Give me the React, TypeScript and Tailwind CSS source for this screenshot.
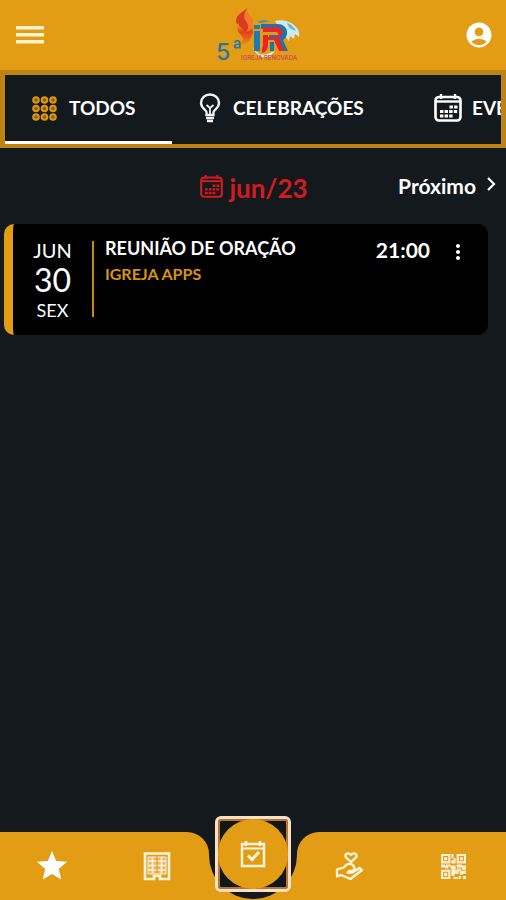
import type { ReactNode } from 'react';
import { MdAccountCircle, MdMoreVert, MdStar } from 'react-icons/md';

function MenuIcon() {
  return (
    <svg viewBox="0 0 28 18" className="h-[18px] w-7" fill="#fff3d2" aria-hidden="true">
      <rect width="28" height="3.5" />
      <rect y="7" width="28" height="3.5" />
      <rect y="14" width="28" height="3.5" />
    </svg>
  );
}

function Logo() {
  return (
    <svg viewBox="0 0 90 60" className="ml-2 h-[60px] w-[90px]" role="img" aria-label="5ª IR">
      <defs>
        <linearGradient id="flame" x1="0" y1="0" x2="0" y2="1">
          <stop offset="0" stopColor="#f4a52a" />
          <stop offset="0.4" stopColor="#e2401c" />
          <stop offset="1" stopColor="#f58a26" />
        </linearGradient>
      </defs>
      <path d="M34 3c-4 4-11 7-11 13 0 4 6 6 9 12 3-4 8-6 8-11 0-5-8-7-6-14z" fill="#d93a20" />
      <path d="M34 3c-3 6-4 9-1 13 2 3 3 6 1 10 4-3 7-5 6-10-1-4-7-7-6-13z" fill="#f27a2a" />
      <path d="M25 18c-2 6 0 9 3 12 3 4 3 7-3 11 9-1 14-7 15-14 0-3 0-5 1-8-2 4-5 7-9 8-3-2-6-5-7-9z" fill="url(#flame)" />
      <path d="M44 17c5-2 8-2 13-1l-9 2z" fill="#3a93b8" />
      <path d="M62 16c7-2 16 0 21 6 3 3 4 6 3 10l-4-3-1 5-4-3-1 5c-4-4-5-9-10-13z" fill="#cfe9ef" />
      <path d="M74 18c4 1 7 4 9 8l-5-2c-2-1-3-3-4-6z" fill="#6cb8d0" />
      <path d="M40 42c2 5 8 9 14 7l8-3-6 6c-7 2-14-2-16-10z" fill="#d3edf2" />
      {/* i */}
      <path d="M41 26h6v20h-6zM41 20h6v4h-6z" fill="#1c7bb0" />
      {/* R, blue outline over red body */}
      <path d="M48 19h17c10 0 12 12 5 16l5 11h-6l-6-11h-7v-5h9c4 0 4-6 0-6H48z" fill="#1a76aa" />
      <path d="M50 22h14c6 0 8 8 2 11l5 13h-5l-5-11h-6v-3h8c3 0 3-5 0-5H50z" fill="#e5252f" />
      <path d="M50 30h5v9c0 5-2 8-6 9v-5c1-1 1-2 1-4z" fill="#e5252f" />
      <path d="M57 37h4v9h-4z" fill="#1a76aa" />
      <text x="3" y="55" fontFamily="Inter, sans-serif" fontSize="23" fontWeight="500" fill="#2679a3">5</text>
      <text x="19" y="51" fontFamily="Inter, sans-serif" fontSize="22" fontWeight="500" fill="#2679a3">ª</text>
      <text x="28" y="55" fontFamily="Inter, sans-serif" fontSize="6" fontWeight="600" fill="#cf4f51">IGREJA RENOVADA</text>
    </svg>
  );
}

function DotsIcon() {
  return (
    <svg viewBox="0 0 25 25" className="size-[25px] shrink-0" aria-hidden="true">
      {[4, 12.5, 21].map((y) =>
        [4, 12.5, 21].map((x) => (
          <circle key={`${x}-${y}`} cx={x} cy={y} r="2.8" fill="#8a6010" stroke="#dc9514" strokeWidth="2" />
        )),
      )}
    </svg>
  );
}

function BulbIcon() {
  return (
    <svg viewBox="0 0 22 30" className="h-[30px] w-[22px] shrink-0" fill="none" stroke="#f2f2f2" strokeWidth="2.4" aria-hidden="true">
      <path d="M7.500 22v-3c0-2-5.500-4-5.500-9a9 8.500 0 0 1 18 0c0 5-5.500 7-5.500 9v3z" />
      <path d="M11 21v-6M7.500 12l3.500 3 3.500-3" strokeWidth="1.8" />
      <path d="M7 25h8M8 28h6" />
    </svg>
  );
}

function CalendarIcon({ className }: { className: string }) {
  return (
    <svg viewBox="0 0 28 28" className={className} fill="none" stroke="currentColor" aria-hidden="true">
      <rect x="1.5" y="3" width="25" height="23.5" rx="3.5" strokeWidth="2.6" />
      <path d="M2 7.500h24" strokeWidth="2.4" />
      <path d="M7 0v5M21 0v5" strokeWidth="2.4" />
      <path d="M15.500 13h8M6 17.500h18M6 22h13" strokeWidth="3" strokeDasharray="3.4 1.2" />
    </svg>
  );
}

function BuildingIcon() {
  return (
    <svg viewBox="0 0 28 30" className="h-[30px] w-7" fill="none" stroke="#fff3da" aria-hidden="true">
      <path d="M2 2.500h24v25.500h-9v-3h-6v3H2z" strokeWidth="2.6" />
      <path d="M5 6h18v17H5z" fill="#eab669" strokeWidth="1" />
      <path d="M9.500 6v17M18.500 6v17M5 10h18M5 14.500h18M5 19h18" strokeWidth="1.6" />
      <path d="M14 5v17" stroke="#e29d14" strokeWidth="1.2" />
    </svg>
  );
}

function EventCheckIcon() {
  return (
    <svg viewBox="0 0 26 28" className="h-7 w-[26px]" fill="none" stroke="#fff6e2" aria-hidden="true">
      <path d="M2 4h22v22H2z" strokeWidth="2.4" />
      <path d="M2 8.500h22" strokeWidth="2" />
      <path d="M6 1v5M20 1v5" strokeWidth="2.6" />
      <path d="M8 15.500l4 4 7-7.500" strokeWidth="3" />
    </svg>
  );
}

function DonateIcon() {
  return (
    <svg viewBox="0 0 28 28" className="size-7" fill="none" stroke="#fff6e2" strokeWidth="2.3" strokeLinejoin="round" aria-hidden="true">
      <path d="M16 10l-5-4.500c-2-3 2-6 5-2.500 3-3.500 7-.5 5 2.500z" />
      <path d="M9 15.500c3-5 8-4.500 10-1 1.500 3-1 5-3.500 4.500M9 15.500l-7 2v7l4-1.500 9.500 4 11.500-9-2.500-2-7 4.500h-5l3.500-2.500" />
    </svg>
  );
}

function QrIcon() {
  return (
    <svg viewBox="0 0 24 24" className="size-[25px]" fill="#fff0dc" aria-hidden="true">
      <path fillRule="evenodd" d="M0 0h9v9H0zM2 2v5h5V2zM15 0h9v9h-9zm2 2v5h5V2zM0 15h9v9H0zm2 2v5h5v-5z" />
      <path d="M3 3h3v3H3zM18 3h3v3h-3zM3 18h3v3H3zM10 0h2v4h-2zM12 4h2v5h-4V6h2zM0 10h4v3H0zM5 10h4v2H7v2H4v-2zM9 11h5v3H9zM10 13h4v3h3v3h-4v2h-3zM15 10h5v3h-5zM20 11h4v4h-4v-2h-1zM15 14h4v2h-4zM18 16h6v3h-3v1h-3zM12 22h4v2h-4zM17 21h2v3h-2zM21 21h3v3h-3z" />
    </svg>
  );
}

function Tab({ icon, label, active, className }: { icon: ReactNode; label: string; active?: boolean; className: string }) {
  return (
    <button
      role="tab"
      aria-selected={!!active}
      className={`flex h-[69px] shrink-0 items-center border-b-3 pl-[27px] text-[19px] font-bold ${
        active ? 'border-white' : 'border-transparent'
      } ${className}`}
    >
      {icon}
      <span>{label}</span>
    </button>
  );
}

function NavButton({ label, children }: { label: string; children: ReactNode }) {
  return (
    <button aria-label={label} className="flex flex-1 items-center justify-center">
      {children}
    </button>
  );
}

export default function App() {
  return (
    <div className="flex min-h-screen flex-col bg-[#14191d] font-['Lato','Liberation_Sans',sans-serif] text-white">
      <header className="flex h-[70px] items-center justify-between bg-[#e29d14] pr-3 pl-4">
        <button aria-label="Menu">
          <MenuIcon />
        </button>
        <Logo />
        <button aria-label="Conta">
          <MdAccountCircle className="size-[30px]" />
        </button>
      </header>

      <div className="border-5 border-b-4 border-[#bd8414] bg-[#14191d]">
        <div role="tablist" className="flex overflow-hidden">
          <Tab active label="TODOS" icon={<DotsIcon />} className="w-[167px] gap-3" />
          <Tab label="CELEBRAÇÕES" icon={<BulbIcon />} className="w-[235px] gap-3" />
          <Tab label="EVENTOS" icon={<CalendarIcon className="size-7 shrink-0" />} className="w-[180px] gap-2.5" />
        </div>
      </div>

      <main className="flex-1">
        <div className="grid h-[76px] grid-cols-[1fr_auto_1fr] items-center pr-2.5 pl-3">
          <h1 className="col-start-2 flex items-center gap-1.5 pt-1 text-[26px] font-bold text-[#d41a1d]">
            <CalendarIcon className="mb-1 size-[23px]" />
            jun/23
          </h1>
          <button className="flex items-center gap-2.5 justify-self-end text-[21px] font-bold">
            Próximo
            <svg viewBox="0 0 10 16" className="mb-1 h-4 w-2.5" fill="none" stroke="white" strokeWidth="2.2" aria-hidden="true">
              <path d="M2 2l6 6-6 6" />
            </svg>
          </button>
        </div>

        <article className="mr-[18px] ml-1 flex h-[111px] rounded-[10px] border-l-9 border-[#e29d14] bg-black">
          <div className="flex w-[79px] flex-col items-center pt-3">
            <span className="text-xl leading-7">JUN</span>
            <span className="text-[32px] leading-8">30</span>
            <span className="text-lg leading-7">SEX</span>
          </div>
          <div className="mt-[17px] h-[76px] w-0.5 bg-[#c98a14]" />
          <div className="flex-1 pt-3 pl-[11px]">
            <h2 className="text-lg leading-6 font-bold">REUNIÃO DE ORAÇÃO</h2>
            <p className="text-base leading-7 font-bold text-[#d8940f]">IGREJA APPS</p>
          </div>
          <time className="pt-3 text-[21px] leading-7 font-bold">21:00</time>
          <button aria-label="Mais opções" className="mt-4 mr-[18px] ml-4 self-start">
            <MdMoreVert className="size-6" />
          </button>
        </article>
      </main>

      <nav className="relative grid h-[68px] grid-cols-[1fr_88px_1fr]">
        <div className="flex rounded-tr-[22px] bg-[#e29d14]">
          <NavButton label="Destaques">
            <MdStar className="size-9" />
          </NavButton>
          <NavButton label="Igreja">
            <BuildingIcon />
          </NavButton>
        </div>
        <div className="bg-[#e29d14]">
          <div className="h-[67px] rounded-b-[44px] bg-[#14191d]" />
        </div>
        <div className="flex rounded-tl-[22px] bg-[#e29d14]">
          <NavButton label="Doações">
            <DonateIcon />
          </NavButton>
          <NavButton label="QR Code">
            <QrIcon />
          </NavButton>
        </div>
        <button
          aria-label="Agenda"
          className="absolute -top-4 left-1/2 size-[76px] -translate-x-1/2 rounded-md border-3 border-[#fbe0c8] bg-[#0f161c] inset-ring-2 inset-ring-[#b9762a]"
        >
          <span className="flex size-full items-center justify-center rounded-full bg-[#e29d14]">
            <EventCheckIcon />
          </span>
        </button>
      </nav>
    </div>
  );
}
